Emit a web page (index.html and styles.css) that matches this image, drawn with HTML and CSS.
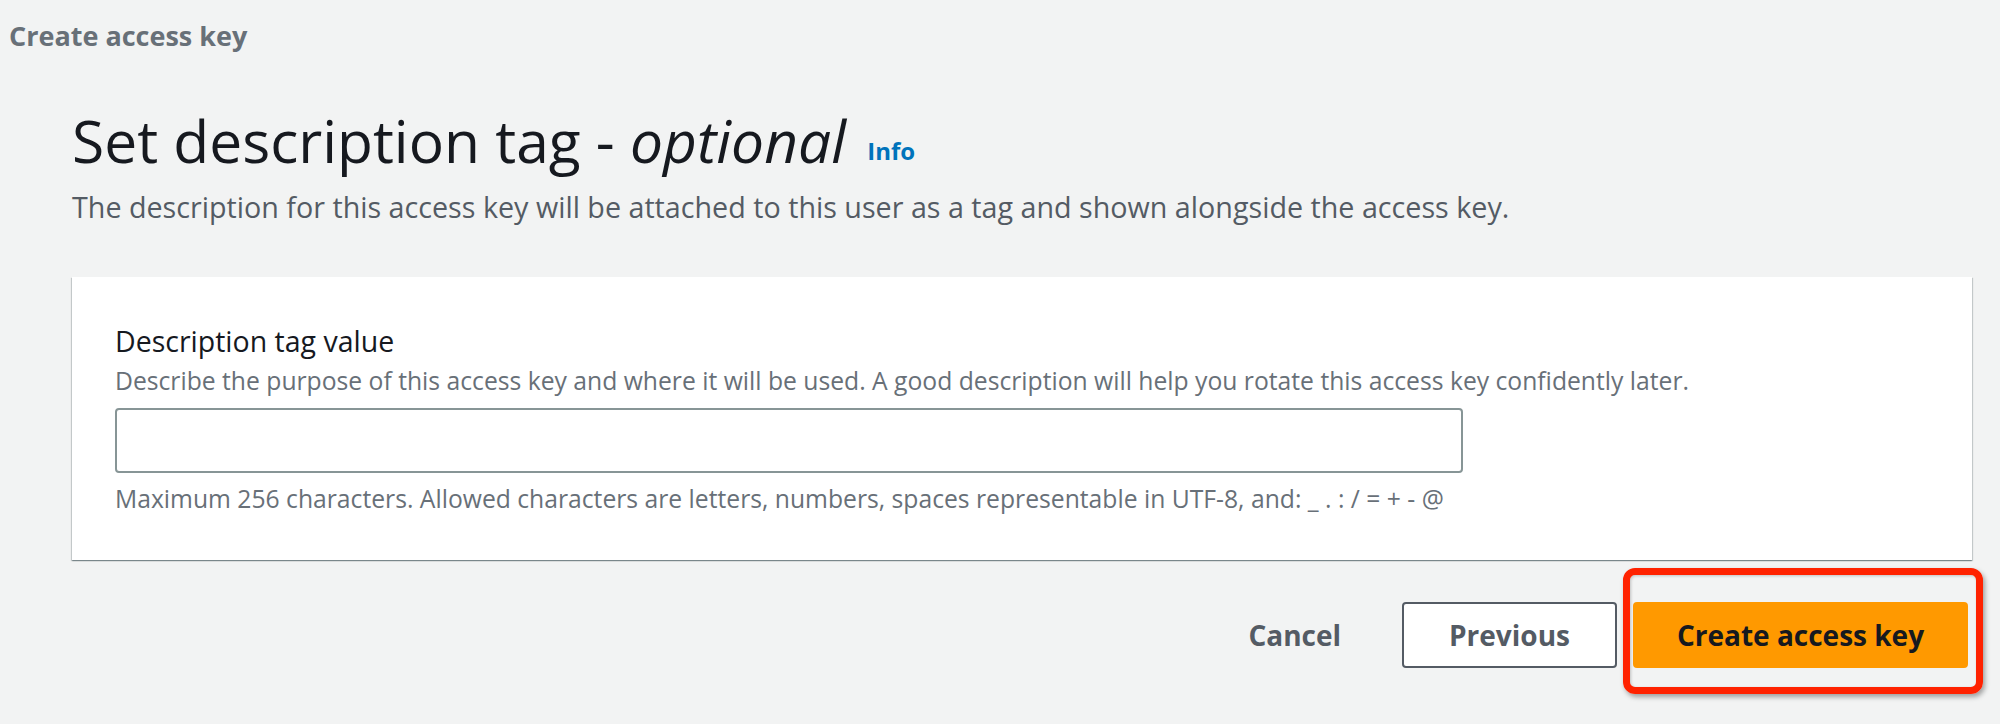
FILE: index.html
```html
<!DOCTYPE html>
<html lang="en">
<head>
<meta charset="utf-8">
<title>Create access key</title>
<link rel="stylesheet" href="styles.css">
</head>
<body>
  <nav class="crumb">Create access key</nav>
  <main class="main">
    <header class="page-head">
      <h1 class="title">Set description tag - <em>optional</em> <a class="info" href="#">Info</a></h1>
      <p class="lead">The description for this access key will be attached to this user as a tag and shown alongside the access key.</p>
    </header>
    <section class="card">
      <label class="label" for="desc">Description tag value</label>
      <p class="hint">Describe the purpose of this access key and where it will be used. A good description will help you rotate this access key confidently later.</p>
      <input class="input" id="desc" type="text">
      <p class="constraint">Maximum 256 characters. Allowed characters are letters, numbers, spaces representable in UTF-8, and: _ . : / = + - @</p>
    </section>
    <div class="actions">
      <button class="btn btn-link" type="button">Cancel</button>
      <button class="btn btn-normal" type="button">Previous</button>
      <span class="primary-wrap">
        <button class="btn btn-primary" type="button">Create access key</button>
        <span class="highlight"></span>
      </span>
    </div>
  </main>
</body>
</html>
```
FILE: styles.css
```css
* { box-sizing: border-box; }
html, body { margin: 0; padding: 0; }
body {
  width: 2000px;
  height: 724px;
  overflow: hidden;
  background: #f2f3f3;
  font-family: "Open Sans", "Noto Sans", sans-serif;
  color: #16191f;
}
.crumb {
  padding: 18px 0 0 9px;
  font-size: 27px;
  line-height: 36px;
  font-weight: 700;
  color: #687078;
}
.main {
  margin: 50px 28px 0 72px;
}
.title {
  margin: 0;
  font-size: 58.7px;
  line-height: 72px;
  font-weight: 400;
  color: #16191f;
}
.title em { font-style: italic; }
.info {
  font-size: 24px;
  font-weight: 700;
  color: #0073bb;
  text-decoration: none;
  margin-left: 6px;
  position: relative;
  top: -3px;
}
.lead {
  margin: -3px 0 0;
  font-size: 28.7px;
  line-height: 40px;
  color: #545b64;
}
.card {
  margin-top: 50px;
  background: #fff;
  padding: 44px 43px 45px;
  height: 283px;
  box-shadow: 0 1px 1px 0 rgba(0, 28, 36, 0.3), 1px 1px 1px 0 rgba(0, 28, 36, 0.15), -1px 1px 1px 0 rgba(0, 28, 36, 0.15);
}
.label {
  display: block;
  font-size: 28.5px;
  line-height: 40px;
  font-weight: 500;
  color: #16191f;
}
.hint, .constraint {
  margin: 4px 0 0;
  font-size: 24.7px;
  line-height: 32px;
  color: #687078;
}
.input {
  display: block;
  margin-top: 11px;
  width: 1348px;
  height: 65px;
  border: 2px solid #879596;
  border-radius: 4px;
  background: #fff;
  font: inherit;
}
.constraint { margin-top: 10px; }
.actions {
  display: flex;
  justify-content: flex-end;
  align-items: center;
  gap: 16px;
  margin-top: 42px;
  padding-right: 4px;
}
.btn {
  font-family: inherit;
  font-size: 28px;
  font-weight: 700;
  line-height: 40px;
  height: 66px;
  padding: 0 45px;
  border-radius: 4px;
  cursor: pointer;
}
.btn-link {
  background: transparent;
  border: 2px solid transparent;
  color: #545b64;
  padding: 0 43px;
}
.btn-normal {
  background: #fff;
  border: 2px solid #545b64;
  color: #545b64;
}
.primary-wrap {
  position: relative;
  display: flex;
}
.btn-primary {
  background: #ff9900;
  border: 2px solid #ff9900;
  color: #16191f;
  width: 335px;
  padding: 0;
}
.highlight {
  position: absolute;
  left: -10px;
  right: -15px;
  top: -34px;
  bottom: -26px;
  border: 7px solid #ff2200;
  border-radius: 12px;
  box-shadow: 2px 3px 5px rgba(0, 0, 0, 0.35), inset 1px 1px 3px rgba(0, 0, 0, 0.2);
  pointer-events: none;
}
```
